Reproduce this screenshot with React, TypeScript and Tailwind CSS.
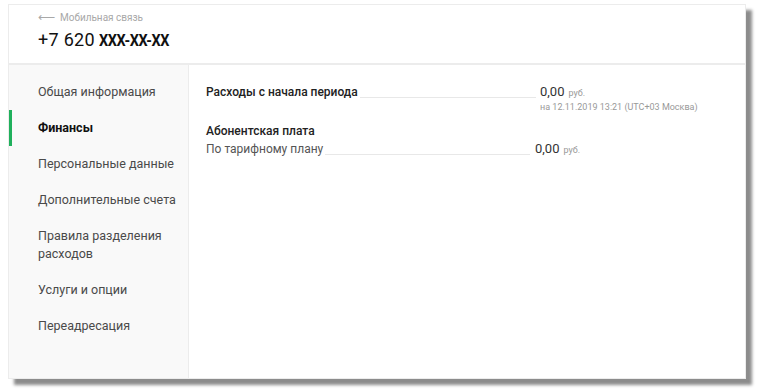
import React from "react";

const menu: React.ReactNode[] = [
  "Общая информация",
  "Финансы",
  "Персональные данные",
  "Дополнительные счета",
  <>Правила разделения<br />расходов</>,
  "Услуги и опции",
  "Переадресация",
];

export default function App() {
  return (
    <div className="w-[758px] h-[392px] bg-white pt-[4px] pl-[8px]" style={{ fontFamily: "Roboto, 'Noto Sans', sans-serif" }}>
      <div className="w-[738px] h-[375px] bg-white border border-[#ececec] shadow-[6px_6px_3px_rgba(0,0,0,0.45)] flex flex-col">
        <div className="h-[60px] border-b-2 border-[#ececec] pl-[29px] pt-[5px] shrink-0">
          <div className="flex items-center gap-[6px] text-[10px] text-[#a8a8a8] h-[14px]">
            <span className="text-[12px] leading-none tracking-[-1px]">⟵</span>
            <span>Мобильная связь</span>
          </div>
          <div className="mt-[6px] text-[18px] text-[#111] leading-[20px] flex items-baseline">
            <span className="tracking-[0.3px]">+7 620</span>
            <span className="ml-[4px] inline-block origin-left scale-x-[0.85] text-[17px] font-bold tracking-[-0.5px]">XXX-XX-XX</span>
          </div>
        </div>
        <div className="flex flex-1 min-h-0">
          <div className="w-[180px] bg-[#f9f9f9] border-r border-[#ececec] pt-[9px] shrink-0">
            {menu.map((m, i) => (
              <div key={i} className="relative pl-[29px] pr-[4px] py-[9px] text-[12.5px] leading-[18px] text-[#4a4a4a] whitespace-nowrap">
                {i === 1 && <div className="absolute left-0 top-0 bottom-0 w-[3px] bg-[#20b05c]" />}
                <span className={i === 1 ? "font-bold text-[#111]" : ""}>{m}</span>
              </div>
            ))}
          </div>
          <div className="flex-1 pl-[17px] pt-[19px] text-[#222]">
            <div className="flex items-end">
              <div className="w-[334px] flex items-end">
                <span className="text-[12px] font-medium leading-[16px] whitespace-nowrap">Расходы с начала периода</span>
                <div className="flex-1 border-b border-[#e8e8e8] mb-[2px] ml-[2px] mr-[4px]" />
              </div>
              <span className="text-[13px] leading-[16px] text-[#333]">0,00</span>
              <span className="ml-[4px] text-[9px] text-[#999] leading-[14px]">руб.</span>
            </div>
            <div className="ml-[334px] text-[9px] text-[#999] leading-[12px] mt-[1px] whitespace-nowrap">на 12.11.2019 13:21 (UTC+03 Москва)</div>
            <div className="mt-[10px] text-[12px] font-medium leading-[16px]">Абонентская плата</div>
            <div className="flex items-end mt-[2px]">
              <div className="w-[329px] flex items-end">
                <span className="text-[12px] text-[#555] leading-[16px] whitespace-nowrap">По тарифному плану</span>
                <div className="flex-1 border-b border-[#e8e8e8] mb-[2px] ml-[2px] mr-[5px]" />
              </div>
              <span className="text-[13px] leading-[16px] text-[#333]">0,00</span>
              <span className="ml-[4px] text-[9px] text-[#999] leading-[14px]">руб.</span>
            </div>
          </div>
        </div>
      </div>
    </div>
  );
}
